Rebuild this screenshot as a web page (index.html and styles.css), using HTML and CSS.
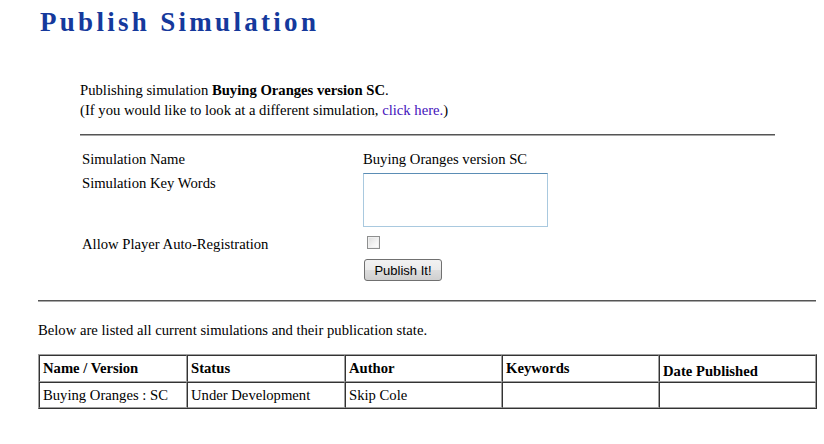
FILE: index.html
```html
<!DOCTYPE html>
<html>
<head>
<meta charset="utf-8">
<title>Publish Simulation</title>
<link rel="stylesheet" href="styles.css">
</head>
<body>
<div class="page">
  <h1 class="title">Publish Simulation</h1>
  <div class="section">
    <div class="intro">
      <div>Publishing simulation <b>Buying Oranges version SC</b>.</div>
      <div>(If you would like to look at a different simulation, <a class="link" href="#">click here.</a>)</div>
    </div>
    <div class="rule"></div>
    <div class="form">
      <div class="row row-name">
        <div class="label">Simulation Name</div>
        <div class="value">Buying Oranges version SC</div>
      </div>
      <div class="row row-keys">
        <div class="label">Simulation Key Words</div>
        <div class="value"><textarea class="keywords"></textarea></div>
      </div>
      <div class="row row-auto">
        <div class="label">Allow Player Auto-Registration</div>
        <div class="value"><input class="check" type="checkbox"></div>
      </div>
      <div class="row row-btn">
        <div class="label"></div>
        <div class="value"><button class="btn" type="button">Publish It!</button></div>
      </div>
    </div>
  </div>
  <div class="rule rule-wide"></div>
  <p class="listing">Below are listed all current simulations and their publication state.</p>
  <table class="sims">
    <tr>
      <th class="c1">Name / Version</th>
      <th class="c2">Status</th>
      <th class="c3">Author</th>
      <th class="c4">Keywords</th>
      <th class="c5 low">Date Published</th>
    </tr>
    <tr>
      <td>Buying Oranges : SC</td>
      <td>Under Development</td>
      <td>Skip Cole</td>
      <td></td>
      <td></td>
    </tr>
  </table>
</div>
</body>
</html>
```

FILE: styles.css
```css
html, body {
  margin: 0;
  padding: 0;
  background: #ffffff;
}
body {
  font-family: "Liberation Serif", "Times New Roman", serif;
  font-size: 14.67px;
  line-height: 20px;
  color: #000;
}
.page {
  padding: 7px 7px 0 38px;
}
.title {
  margin: 0 0 0 2px;
  font-family: "Liberation Serif", serif;
  font-size: 27px;
  line-height: 30px;
  font-weight: bold;
  letter-spacing: 3.3px;
  color: #15399c;
}
.section {
  margin-left: 42px;
  width: 695px;
}
.intro {
  margin-top: 43px;
}
.link {
  color: #4411bb;
  text-decoration: none;
}
.rule {
  margin-top: 14px;
  height: 0;
  border-top: 1px solid #555;
  border-bottom: 1px solid #a8a8a8;
}
.rule-wide {
  margin-top: 19px;
  width: 778px;
}
.form {
  padding-left: 2px;
  display: flex;
  flex-direction: column;
}
.row {
  display: grid;
  grid-template-columns: 281px 1fr;
}
.row-name { margin-top: 13px; }
.row-keys { margin-top: 4px; }
.row-auto { margin-top: 7px; }
.row-btn { margin-top: 5px; }
.value {
  display: flex;
  align-items: flex-start;
}
.keywords {
  box-sizing: border-box;
  width: 185px;
  height: 54px;
  margin: 0;
  padding: 2px;
  border: 1px solid #a9c9df;
  border-top-color: #5b8db5;
  border-left-color: #a9c9df;
  resize: none;
  font-family: "Liberation Mono", monospace;
  font-size: 13px;
}
.check {
  appearance: none;
  -webkit-appearance: none;
  box-sizing: border-box;
  width: 13px;
  height: 13px;
  margin: 2px 0 0 4px;
  border: 1px solid #8e8f8f;
  background: linear-gradient(135deg, #dcdcdc 0%, #f4f4f4 60%, #ffffff 100%);
  box-shadow: inset 0 0 0 1px #f0f0f0;
}
.btn {
  box-sizing: border-box;
  width: 78px;
  height: 22px;
  margin: 0 0 0 1px;
  padding: 0;
  border: 1px solid #707070;
  border-radius: 3px;
  background: linear-gradient(#f2f2f2 0%, #ebebeb 48%, #dddddd 52%, #cfcfcf 100%);
  font-family: "Liberation Sans", Arial, sans-serif;
  font-size: 13px;
  color: #000;
}
.listing {
  margin: 18px 0 0 0;
}
.sims {
  margin-top: 14px;
  width: 779px;
  table-layout: fixed;
  border-collapse: separate;
  border-spacing: 0;
  border: 1px solid;
  border-color: #a0a0a0 #333 #333 #a0a0a0;
}
.sims th, .sims td {
  box-sizing: border-box;
  border: 1px solid;
  border-color: #333 #a0a0a0 #a0a0a0 #333;
  padding: 0 2px 0 3px;
  text-align: left;
  vertical-align: middle;
}
.sims th {
  height: 27px;
  font-weight: bold;
  padding-top: 1px;
  padding-bottom: 3px;
}
.sims td {
  height: 26px;
}
.sims .low {
  padding-top: 4px;
  padding-bottom: 0;
}
.c1 { width: 148px; }
.c2 { width: 158px; }
.c3 { width: 157px; }
.c4 { width: 157px; }
.c5 { width: 157px; }
```
